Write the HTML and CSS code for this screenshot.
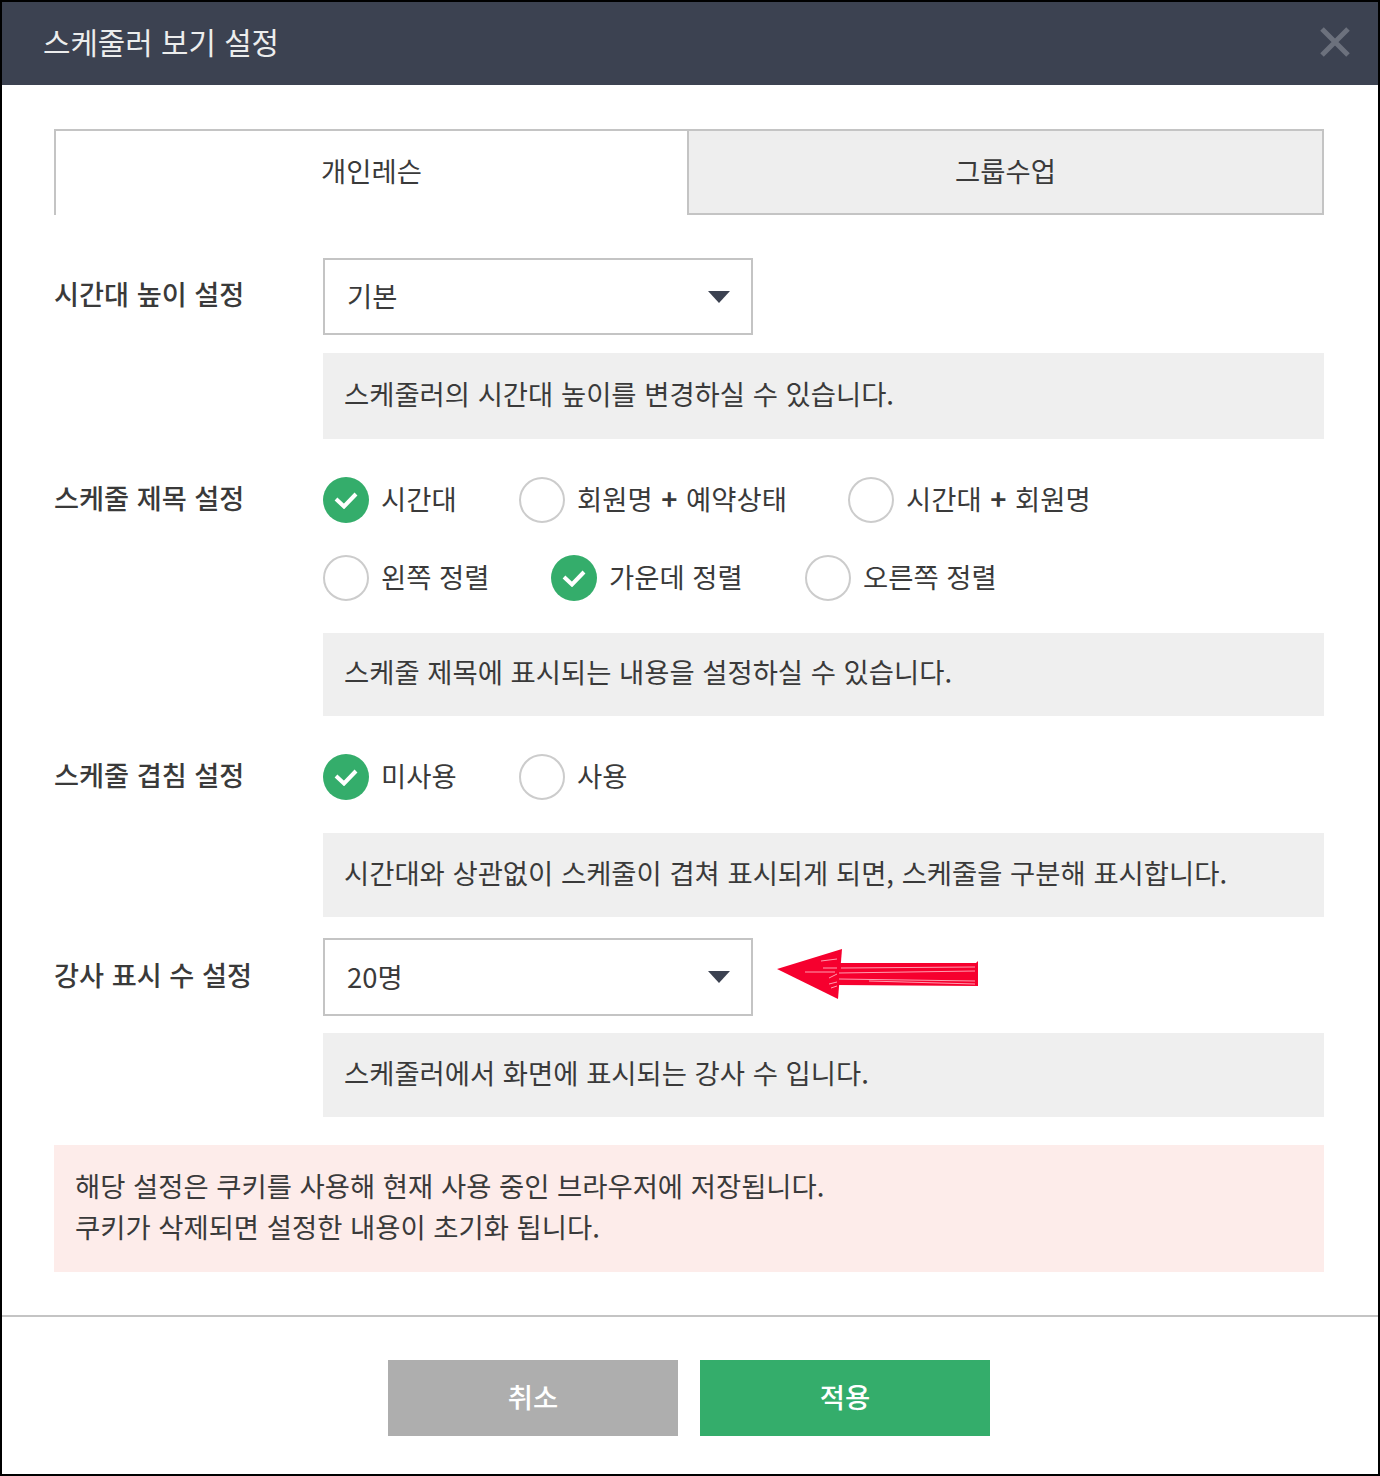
FILE: index.html
```html
<!DOCTYPE html>
<html lang="ko">
<head>
  <meta charset="UTF-8">
  <title>스케줄러 보기 설정</title>
  <link rel="stylesheet" href="styles.css">
</head>
<body>
  <div class="modal">
    <header class="modalHeader">
      <h1 class="modalTitle">스케줄러 보기 설정</h1>
      <svg class="closeIcon" width="32" height="32" viewBox="0 0 32 32"><path d="M3 3L29 29M29 3L3 29" stroke="#6c717d" stroke-width="5" fill="none"/></svg>
    </header>

    <div class="modalBody">
      <div class="tabs">
        <div class="tab tabActive">개인레슨</div>
        <div class="tab">그룹수업</div>
      </div>

      <section class="row rowHeight">
        <div class="rowLabel">시간대 높이 설정</div>
        <div class="rowContent">
          <div class="select selectShort">
            <span class="selectText">기본</span>
            <span class="caret"></span>
          </div>
          <p class="desc descHeight">스케줄러의 시간대 높이를 변경하실 수 있습니다.</p>
        </div>
      </section>

      <section class="row rowTitle">
        <div class="rowLabel">스케줄 제목 설정</div>
        <div class="rowContent">
          <div class="radioLine">
            <label class="radio radioW1"><span class="dot on"><svg width="24" height="18" viewBox="0 0 24 18"><path d="M2 8L10 15.5L22 3" stroke="#fff" stroke-width="4" fill="none"/></svg></span><span class="radioText">시간대</span></label>
            <label class="radio radioW2"><span class="dot"></span><span class="radioText">회원명 <b class="plus">+</b> 예약상태</span></label>
            <label class="radio"><span class="dot"></span><span class="radioText">시간대 <b class="plus">+</b> 회원명</span></label>
          </div>
          <div class="radioLine">
            <label class="radio radioW3"><span class="dot"></span><span class="radioText">왼쪽 정렬</span></label>
            <label class="radio radioW4"><span class="dot on"><svg width="24" height="18" viewBox="0 0 24 18"><path d="M2 8L10 15.5L22 3" stroke="#fff" stroke-width="4" fill="none"/></svg></span><span class="radioText">가운데 정렬</span></label>
            <label class="radio"><span class="dot"></span><span class="radioText">오른쪽 정렬</span></label>
          </div>
          <p class="desc descTitle">스케줄 제목에 표시되는 내용을 설정하실 수 있습니다.</p>
        </div>
      </section>

      <section class="row rowOverlap">
        <div class="rowLabel">스케줄 겹침 설정</div>
        <div class="rowContent">
          <div class="radioLine">
            <label class="radio radioW1"><span class="dot on"><svg width="24" height="18" viewBox="0 0 24 18"><path d="M2 8L10 15.5L22 3" stroke="#fff" stroke-width="4" fill="none"/></svg></span><span class="radioText">미사용</span></label>
            <label class="radio"><span class="dot"></span><span class="radioText">사용</span></label>
          </div>
          <p class="desc descOverlap">시간대와 상관없이 스케줄이 겹쳐 표시되게 되면, 스케줄을 구분해 표시합니다.</p>
        </div>
      </section>

      <section class="row rowCount">
        <div class="rowLabel">강사 표시 수 설정</div>
        <div class="rowContent">
          <div class="selectLine">
            <div class="select">
              <span class="selectText">20명</span>
              <span class="caret"></span>
            </div>
            <svg class="arrow" width="202" height="52" viewBox="0 0 202 52">
              <path d="M0 21L65 1L61 51Z" fill="#f6002e"/>
              <path d="M60 15L199 15L201 13L201 38L60 37Z" fill="#f6002e"/>
              <path d="M64 20L198 19M62 25L198 23M62 31L198 33M44 13L60 11M46 20L60 20M28 24L58 24M52 30L60 26M52 36L60 34M54 40L60 38M92 33L198 36" stroke="#ff9db0" stroke-width="1" fill="none"/>
            </svg>
          </div>
          <p class="desc descCount">스케줄러에서 화면에 표시되는 강사 수 입니다.</p>
        </div>
      </section>

      <div class="notice">
        해당 설정은 쿠키를 사용해 현재 사용 중인 브라우저에 저장됩니다.<br>
        쿠키가 삭제되면 설정한 내용이 초기화 됩니다.
      </div>
    </div>

    <footer class="modalFooter">
      <button class="btn btnCancel">취소</button>
      <button class="btn btnApply">적용</button>
    </footer>
  </div>
</body>
</html>
```

FILE: styles.css
```css
html, body {
  padding: 0;
  margin: 0;
  background-color: #000000;
  font-family: "Noto Sans CJK KR", "Noto Sans", sans-serif;
  color: #3a3a3a;
}

.modal {
  width: 1376px;
  height: 1472px;
  margin: 2px;
  background-color: #ffffff;
  display: flex;
  flex-direction: column;
}

.modalHeader {
  height: 83px;
  box-sizing: border-box;
  padding: 0 27px 3px 41px;
  background-color: #3c4251;
  display: flex;
  justify-content: space-between;
  align-items: center;
}

.modalTitle {
  margin: 0 0 3px;
  font-size: 29.8px;
  font-weight: 400;
  color: #eceded;
}

.modalBody {
  flex: 1;
  padding: 44px 54px 0 52px;
}

.tabs {
  display: flex;
  height: 86px;
  font-size: 27.4px;
}

.tab {
  flex: 1;
  display: flex;
  justify-content: center;
  align-items: center;
  background-color: #eeeeee;
  border: 2px solid #c4c4c4;
  box-sizing: border-box;
  padding-bottom: 5px;
}

.tabActive {
  flex: none;
  width: 633px;
  background-color: #ffffff;
  border-right: none;
  border-bottom: none;
  padding-bottom: 7px;
}

.row {
  display: flex;
  font-size: 27.4px;
}

.rowHeight { margin-top: 43px; }
.rowTitle { margin-top: 38px; }
.rowOverlap { margin-top: 38px; }
.rowCount { margin-top: 21px; }

.rowLabel {
  width: 269px;
  flex: none;
  line-height: 40px;
  font-size: 27.2px;
  font-weight: 500;
}

.rowHeight .rowLabel { padding-top: 15px; }
.rowCount .rowLabel { padding-top: 16px; }

.rowContent {
  flex: 1;
  min-width: 0;
}

.selectLine {
  display: flex;
  align-items: center;
  gap: 24px;
}

.select {
  width: 430px;
  height: 78px;
  box-sizing: border-box;
  border: 2px solid #c4c4c4;
  padding: 0 21px 0 22px;
  display: flex;
  justify-content: space-between;
  align-items: center;
}

.selectShort {
  height: 77px;
}

.selectText {
  margin-bottom: 3px;
}

.caret {
  width: 0;
  height: 0;
  border-left: 11px solid transparent;
  border-right: 11px solid transparent;
  border-top: 12px solid #3c4251;
}

.arrow {
  margin-top: -6px;
}

.desc {
  margin: 0;
  background-color: #efefef;
  box-sizing: border-box;
  padding: 0 21px 7px;
  display: flex;
  align-items: center;
  height: 84px;
  font-size: 27.4px;
}

.descHeight { margin-top: 18px; height: 86px; }
.descTitle { margin-top: 32px; height: 83px; }
.descOverlap { margin-top: 33px; }
.descCount { margin-top: 17px; }

.radioLine {
  display: flex;
  height: 46px;
}

.radioLine + .radioLine {
  margin-top: 32px;
}

.radio {
  flex: none;
  display: flex;
  align-items: center;
  gap: 12px;
  margin-right: 63px;
  white-space: nowrap;
}

.radioText {
  margin-bottom: 4px;
}

.plus {
  font-weight: 700;
  margin: 0 1px;
}

.radioW1 { width: 133px; }
.radioW2 { width: 266px; }
.radioW3 { width: 165px; }
.radioW4 { width: 191px; }

.dot {
  width: 46px;
  height: 46px;
  box-sizing: border-box;
  border: 2px solid #cccccc;
  border-radius: 50%;
  flex: none;
  display: flex;
  justify-content: center;
  align-items: center;
}

.dot.on {
  background-color: #34ad6b;
  border: none;
}

.notice {
  margin-top: 28px;
  height: 127px;
  box-sizing: border-box;
  padding: 20px 21px;
  background-color: #fdecea;
  font-size: 27.4px;
  line-height: 41px;
}

.modalFooter {
  border-top: 2px solid #c4c4c4;
  height: 159px;
  box-sizing: border-box;
  padding: 43px 2px 0 0;
  display: flex;
  justify-content: center;
  gap: 22px;
}

.btn {
  width: 290px;
  height: 76px;
  border: none;
  padding: 0 0 4px;
  color: #ffffff;
  font-family: inherit;
  font-size: 27.4px;
  font-weight: 500;
}

.btnCancel { background-color: #aeaeae; }
.btnApply { background-color: #34ad6b; }
```
